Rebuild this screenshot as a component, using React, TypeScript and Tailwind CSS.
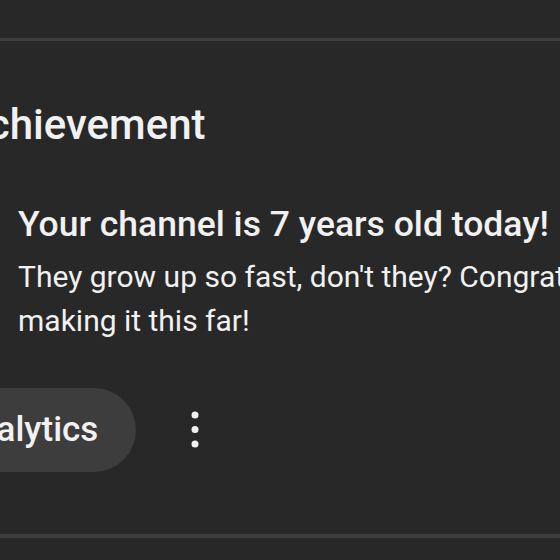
const App = () => {
  return (
    <div className="h-[560px] w-[560px] overflow-hidden bg-[#282828] font-['Roboto',sans-serif] text-[#f1f1f1]">
      <div className="pt-[38px]">
        <div className="h-[3px] bg-[#3e3e3e]" />
      </div>

      <h2 className="mt-[60px] -ml-[40px] whitespace-nowrap text-[42px] font-medium leading-[48px]">
        Achievement
      </h2>

      <div className="pl-[18px]">
        <p className="mt-[55px] whitespace-nowrap text-[35.5px] font-medium leading-[40px]">
          Your channel is 7 years old today!
        </p>
        <p className="mt-[11px] w-[760px] text-[30px] leading-[44px]">
          They grow up so fast, don't they? Congratulations on making it this far!
        </p>
      </div>

      <div className="mt-[45px] flex items-center">
        <button
          type="button"
          className="-ml-[172px] flex h-[84px] shrink-0 items-center whitespace-nowrap rounded-full bg-[#3d3d3d] pl-[38px] pr-[38px] text-[35px] font-medium"
        >
          Go to analytics
        </button>
        <span className="ml-[35px] flex h-[48px] w-[48px] items-center justify-center">
          <svg width="12" height="44" viewBox="0 0 12 44" fill="#f1f1f1">
            <circle cx="6" cy="7" r="3.5" />
            <circle cx="6" cy="21.5" r="3.5" />
            <circle cx="6" cy="36" r="3.5" />
          </svg>
        </span>
      </div>

      <div className="mt-[62px] h-[4px] bg-[#3e3e3e]" />
    </div>
  );
};

export default App;
